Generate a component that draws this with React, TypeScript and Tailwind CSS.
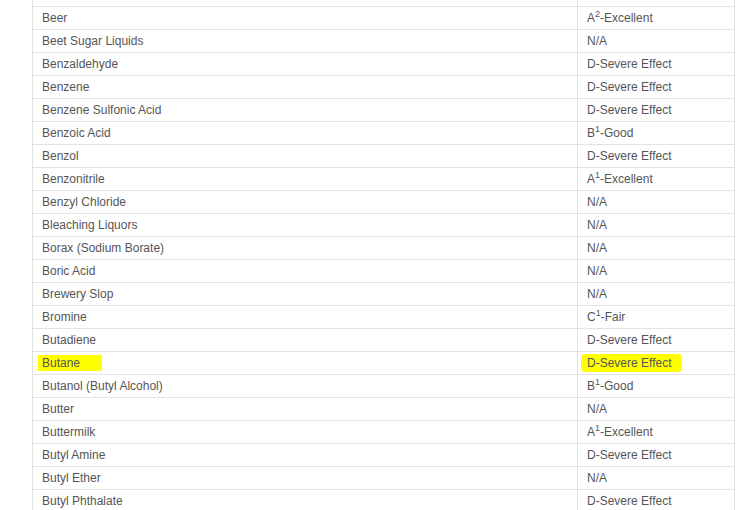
import React from "react";

type Row = { name: string; rating: React.ReactNode; hl?: boolean };

const Sup = ({ l, n, rest }: { l: string; n: string; rest: string }) => (
  <span>
    {l}
    <sup className="text-[9px] relative top-[-0.6em] align-baseline">{n}</sup>
    {rest}
  </span>
);

const rows: Row[] = [
  { name: "Beer", rating: <Sup l="A" n="2" rest="-Excellent" /> },
  { name: "Beet Sugar Liquids", rating: "N/A" },
  { name: "Benzaldehyde", rating: "D-Severe Effect" },
  { name: "Benzene", rating: "D-Severe Effect" },
  { name: "Benzene Sulfonic Acid", rating: "D-Severe Effect" },
  { name: "Benzoic Acid", rating: <Sup l="B" n="1" rest="-Good" /> },
  { name: "Benzol", rating: "D-Severe Effect" },
  { name: "Benzonitrile", rating: <Sup l="A" n="1" rest="-Excellent" /> },
  { name: "Benzyl Chloride", rating: "N/A" },
  { name: "Bleaching Liquors", rating: "N/A" },
  { name: "Borax (Sodium Borate)", rating: "N/A" },
  { name: "Boric Acid", rating: "N/A" },
  { name: "Brewery Slop", rating: "N/A" },
  { name: "Bromine", rating: <Sup l="C" n="1" rest="-Fair" /> },
  { name: "Butadiene", rating: "D-Severe Effect" },
  { name: "Butane", rating: "D-Severe Effect", hl: true },
  { name: "Butanol (Butyl Alcohol)", rating: <Sup l="B" n="1" rest="-Good" /> },
  { name: "Butter", rating: "N/A" },
  { name: "Buttermilk", rating: <Sup l="A" n="1" rest="-Excellent" /> },
  { name: "Butyl Amine", rating: "D-Severe Effect" },
  { name: "Butyl Ether", rating: "N/A" },
  { name: "Butyl Phthalate", rating: "D-Severe Effect" },
];

export default function App() {
  return (
    <div
      className="w-[739px] h-[510px] overflow-hidden bg-white text-[12px] text-[#555]"
      style={{ fontFamily: '"Liberation Sans", Arial, sans-serif' }}
    >
      <div className="ml-[32px] w-[703px]">
        <div className="flex h-[7px] border-b border-[#e2e2e2]">
          <div className="w-[546px] border-l border-r border-[#e2e2e2]" />
          <div className="flex-1 border-r border-[#e2e2e2]" />
        </div>
        {rows.map((r) => (
          <div key={r.name} className="flex h-[23px] border-b border-[#e2e2e2]">
            <div className="w-[546px] border-l border-r border-[#e2e2e2] flex items-center pl-[9px]">
              {r.hl ? (
                <span className="bg-[#ffff00] h-[16px] flex items-center pr-[22px] ml-[-4px] pl-[4px]">
                  {r.name}
                </span>
              ) : (
                <span>{r.name}</span>
              )}
            </div>
            <div className="flex-1 border-r border-[#e2e2e2] flex items-center pl-[9px]">
              {r.hl ? (
                <span className="bg-[#ffff00] h-[18px] flex items-center rounded-[4px] ml-[-6px] pl-[6px] pr-[11px]">
                  {r.rating}
                </span>
              ) : (
                <span>{r.rating}</span>
              )}
            </div>
          </div>
        ))}
      </div>
    </div>
  );
}
